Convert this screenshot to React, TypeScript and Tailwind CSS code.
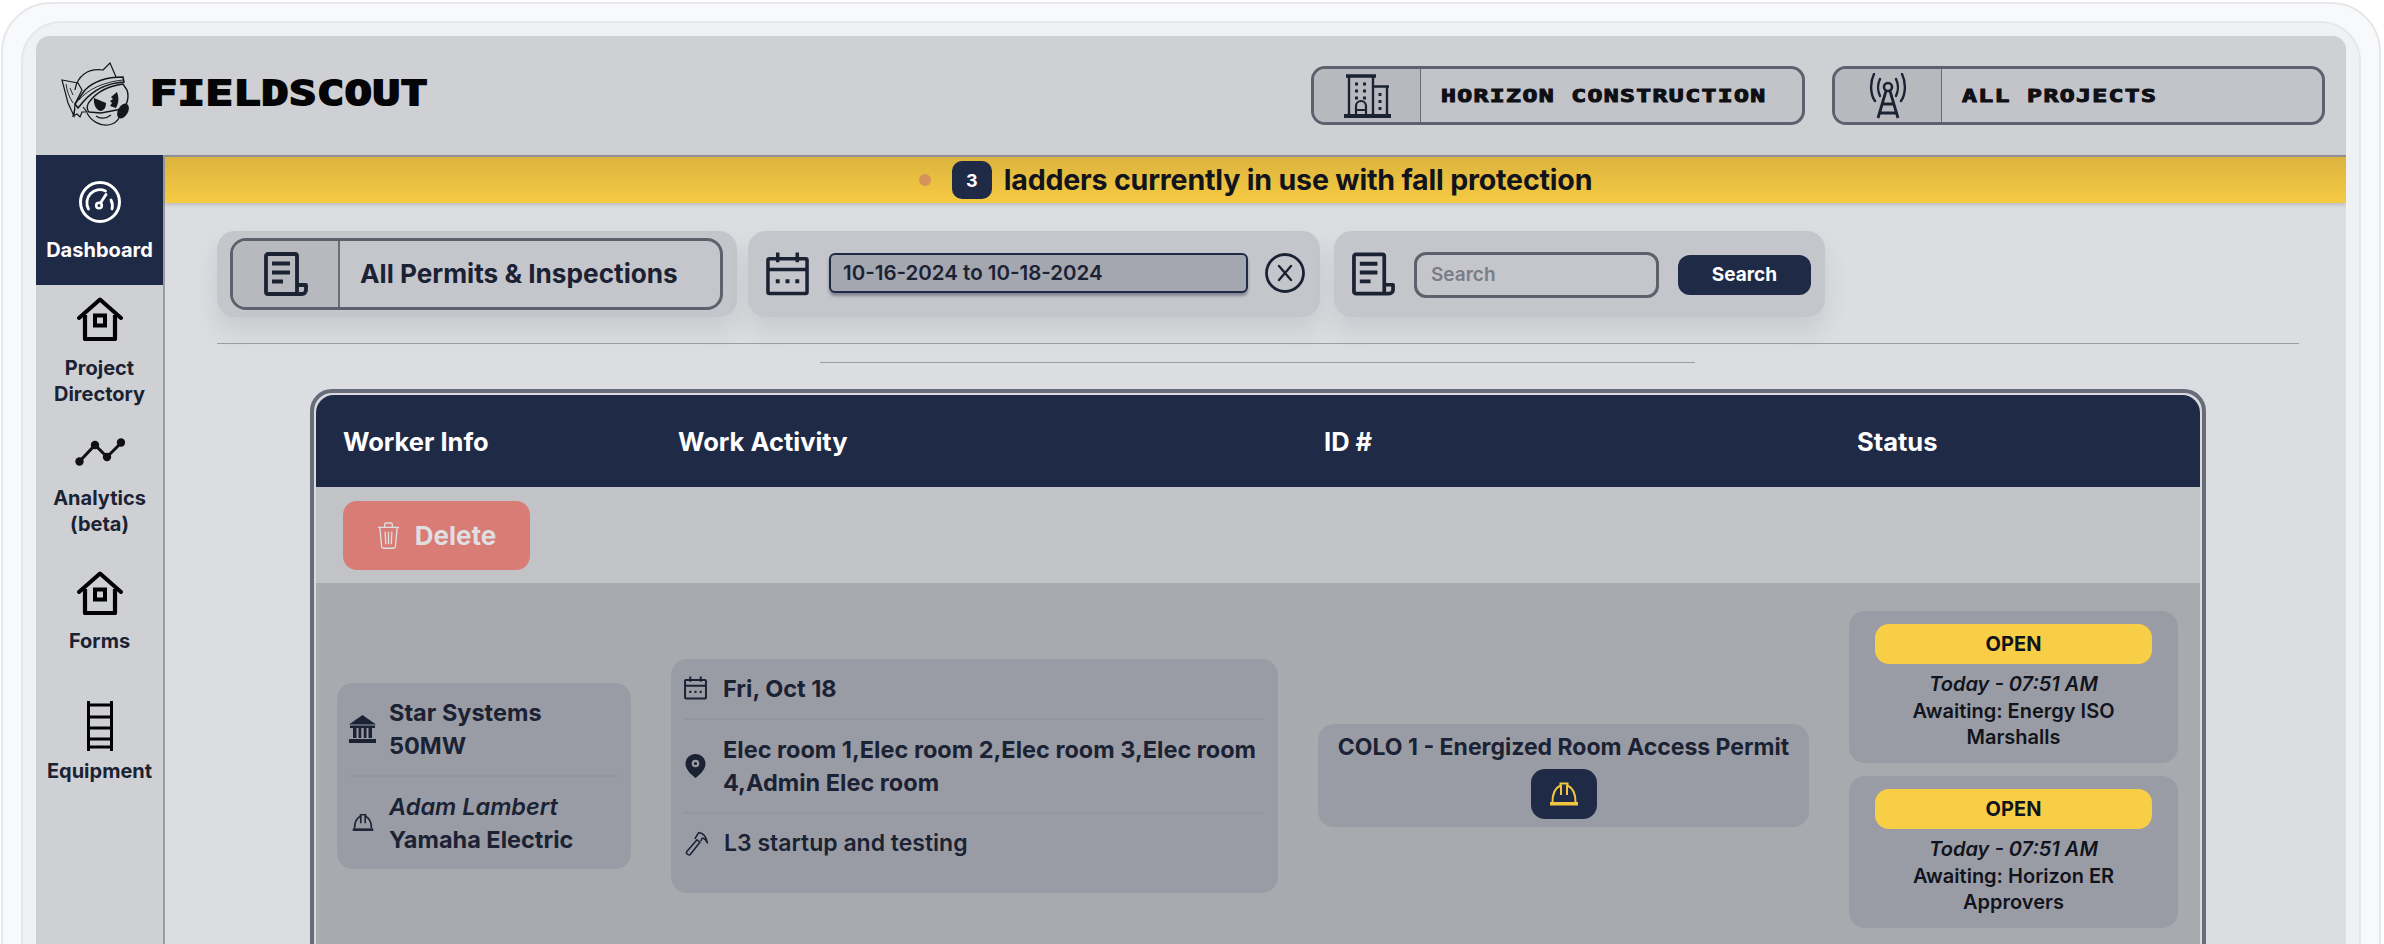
import { ReactNode } from 'react'

const navy = '#1f2a47'

function Gauge({ className }: { className?: string }) {
  return (
    <svg viewBox="0 0 42 42" fill="none" stroke="currentColor" className={className}>
      <circle cx="21" cy="21" r="19.5" strokeWidth="3" />
      <path d="M9.500 28a13 13 0 0 1 17-18" strokeWidth="2.800" strokeLinecap="round" />
      <path d="M33 28a13 13 0 0 0-1-9" strokeWidth="2.800" strokeLinecap="round" />
      <circle cx="20" cy="24.500" r="2.800" strokeWidth="2.600" />
      <path d="M21.500 22 27 13.500" strokeWidth="2.800" strokeLinecap="round" />
    </svg>
  )
}

function HomeIcon({ className }: { className?: string }) {
  return (
    <svg viewBox="0 0 46 44" fill="none" stroke="currentColor" className={className}>
      <path d="M2 21 23 2.500 44 21" strokeWidth="4" strokeLinecap="round" strokeLinejoin="round" />
      <path d="M8 18v24h30V18" strokeWidth="4.200" strokeLinejoin="round" />
      <rect x="18" y="18.500" width="10" height="10" strokeWidth="4" />
    </svg>
  )
}

function ChartIcon({ className }: { className?: string }) {
  return (
    <svg viewBox="0 0 50 28" fill="none" stroke="currentColor" className={className}>
      <path d="M4 24 20 7l12 12L46 5" strokeWidth="3" />
      <g fill="currentColor" stroke="none">
        <circle cx="4.500" cy="23.500" r="4.200" />
        <circle cx="20" cy="7" r="4.200" />
        <circle cx="32" cy="19" r="4.200" />
        <circle cx="46" cy="4.500" r="4.200" />
      </g>
    </svg>
  )
}

function LadderIcon({ className }: { className?: string }) {
  return (
    <svg viewBox="0 0 26 50" fill="none" stroke="currentColor" strokeWidth="3" className={className}>
      <path d="M1.500 0v50M24.500 0v50M1.500 4h23M1.500 16h23M1.500 27h23M1.500 38h23M1.500 46h23" />
    </svg>
  )
}

function ScrollDoc({ className }: { className?: string }) {
  return (
    <svg viewBox="0 0 44 44" fill="none" stroke="currentColor" className={className}>
      <path d="M33 41V4a2 2 0 0 0-2-2H4a2 2 0 0 0-2 2v36a2 2 0 0 0 2 2h34a4 4 0 0 0 4-4v-5h-9" strokeWidth="3.800" strokeLinejoin="round" />
      <path d="M8 11.500h18M8 20.500h18M8 29.500h11" strokeWidth="4" />
    </svg>
  )
}

function CalendarIcon({ className, sw = 3.600 }: { className?: string; sw?: number }) {
  return (
    <svg viewBox="0 0 44 44" fill="none" stroke="currentColor" className={className}>
      <rect x="2" y="6.500" width="40" height="35.500" rx="1.500" strokeWidth={sw} />
      <path d="M2 17.500h40M12 0v10M32 0v10" strokeWidth={sw} />
      <path d="M10 29.500h4M20 29.500h4M30 29.500h4" strokeWidth={sw + 0.5} />
    </svg>
  )
}

function XCircle({ className }: { className?: string }) {
  return (
    <svg viewBox="0 0 40 40" fill="none" stroke="currentColor" className={className}>
      <circle cx="20" cy="20" r="18.500" strokeWidth="2.800" />
      <path d="m14 13 12 14m0-14L14 27" strokeWidth="2.400" strokeLinecap="round" />
    </svg>
  )
}

function BuildingIcon({ className }: { className?: string }) {
  return (
    <svg viewBox="0 0 47 44" fill="none" stroke="#1b2233" className={className}>
      <path d="M2 2h30" strokeWidth="3.500" />
      <path d="M5 2v39M29 2v39M29 12.500h16M43 12.500V41" strokeWidth="2.400" />
      <path d="M0 42h47" strokeWidth="4" />
      <path d="M12 41V32a5 5 0 0 1 10 0v9M12 36h10" strokeWidth="2.200" />
      <path d="M11 10h3M19 10h3M11 17h3M19 17h3M11 24h3M19 24h3M36 19v3M36 26v3M36 33v3" strokeWidth="3" />
    </svg>
  )
}

function TowerIcon({ className }: { className?: string }) {
  return (
    <svg viewBox="0 0 46 46" fill="none" stroke="#1b2233" className={className}>
      <circle cx="23" cy="14" r="4" strokeWidth="2.600" />
      <path d="M21 18 13 45M25 18l8 27M17 31h12M15 40h16" strokeWidth="2.800" />
      <path d="M15 6c-2.500 5-2.500 12 0 17M31 6c2.500 5 2.500 12 0 17M9 1C5 9 5 21 10 28M37 1c4 8 4 20-1 27" strokeWidth="2.400" strokeLinecap="round" />
    </svg>
  )
}

function HardHat({ className, sw = 2 }: { className?: string; sw?: number }) {
  return (
    <svg viewBox="0 0 30 24" fill="none" stroke="currentColor" className={className}>
      <path d="M3.500 20C3.500 12 6 6 11.500 3.500V1.500h7v2C24 6 26.500 12 26.500 20" strokeWidth={sw} />
      <path d="M12 3v10M18 3v10" strokeWidth={sw} />
      <path d="M1 20h28v3.500H1z" fill="currentColor" stroke="none" />
    </svg>
  )
}

function BankIcon({ className }: { className?: string }) {
  return (
    <svg viewBox="0 0 27 28" fill="currentColor" className={className}>
      <path d="M13.500 0 27 9.500H0z" />
      <rect x="1" y="10.500" width="25" height="2.500" />
      <rect x="4" y="13" width="3.500" height="10" />
      <rect x="9.500" y="13" width="2.800" height="10" />
      <rect x="14.700" y="13" width="2.800" height="10" />
      <rect x="19.500" y="13" width="3.500" height="10" />
      <rect x="0" y="24" width="27" height="4" />
    </svg>
  )
}

function PinIcon({ className }: { className?: string }) {
  return (
    <svg viewBox="0 0 20 24" className={className}>
      <path d="M10 0C4.500 0 0 4.300 0 9.700 0 15.500 6 21 10 24c4-3 10-8.500 10-14.300C20 4.300 15.500 0 10 0z" fill="currentColor" />
      <circle cx="10" cy="9.500" r="3.800" fill="#9a9ca5" />
      <circle cx="10" cy="9.500" r="1.600" fill="currentColor" />
    </svg>
  )
}

function HammerIcon({ className }: { className?: string }) {
  return (
    <svg viewBox="0 0 24 24" fill="none" stroke="currentColor" strokeWidth="1.500" strokeLinejoin="round" className={className}>
      <path d="M2.500 20 12.500 8.500l2.800 2.300L5.800 22.800c-1.200 1-4.200-1.400-3.300-2.800z" />
      <path d="M10.500 7.500 14 1.500c4.500.5 7.500 4.500 8.500 10-1.500-3-3-4.500-5-4.800l-1.500 3" />
    </svg>
  )
}

function TrashIcon({ className }: { className?: string }) {
  return (
    <svg viewBox="0 0 24 28" fill="none" stroke="currentColor" strokeWidth="1.400" className={className}>
      <path d="M1 5.500h22M3 6l1.800 19.500a2 2 0 0 0 2 1.800h10.400a2 2 0 0 0 2-1.800L21 6M8 5V2.500a1.500 1.500 0 0 1 1.500-1.500h5A1.500 1.500 0 0 1 16 2.500V5" />
      <path d="M8.500 10l.6 13M12 10v13M15.500 10l-.6 13" />
    </svg>
  )
}

// mascot head with helmet and goggles, drawn by hand
function Logo() {
  return (
    <svg viewBox="0 0 68 64" fill="none" stroke="#15171c" strokeWidth="1.200" className="w-[68px] h-[64px]">
      <path d="M14 28C16 14 27 6 42 8L49 1l6 14" />
      <path d="M1 18l16 3 4 7-7 14-1 12-6-13z" />
      <path d="M5 22c1 7 3 13 7 19M9 26l3 7" strokeWidth="0.900" />
      <path d="M14 42 24 28c8-8 22-13 38-13l1 5c-15 1-30 7-41 20l-5 6z" fill="#cfd0d4" strokeWidth="1.500" />
      <path d="M18 38c9-11 25-18 44-20" strokeWidth="0.900" />
      <path d="M29 39c-3 3-4 8-1 11l12 1 21-4c6-4 7-13 5-19l-4-6C47 24 36 30 29 39z" fill="#cfd0d4" strokeWidth="1.400" />
      <path d="M33 36l12 5c0 5-2 7-5 8-4 0-8-6-7-13z" fill="#15171c" stroke="none" />
      <path d="M56 30l-6 5 2 2-3 2 2 2-2 3 6 2c3-5 3-11 1-16z" fill="#15171c" stroke="none" />
      <path d="M26 51c4 8 13 13 21 12 7-1 10-4 12-9" />
      <path d="M35 54c4 3 10 3 15-1" />
      <ellipse cx="62" cy="49" rx="5" ry="8" fill="#15171c" stroke="none" transform="rotate(30 62 49)" />
      <path d="M14 47l-2 7 4-2 3 3 2-5 5 0-4-5" />
    </svg>
  )
}

function SideItem({ icon, label, className }: { icon: ReactNode; label: ReactNode; className: string }) {
  return (
    <div className={`flex flex-col items-center ${className}`}>
      {icon}
      <span className="text-[20px] leading-[26px] font-bold text-center text-[#1b2233] mt-[var(--g)]">{label}</span>
    </div>
  )
}

function TopPill({ icon, label, className }: { icon: ReactNode; label: string; className: string }) {
  return (
    <div className={`flex h-[59px] rounded-[14px] border-[3px] border-[#5d616e] bg-[#c3c4c9] overflow-hidden ${className}`}>
      <div className="w-[107px] shrink-0 flex items-center justify-center bg-[#b8b9be] border-r border-[#6a6d78]">{icon}</div>
      <span className="ml-[20px] self-center font-['DejaVu_Sans_Mono'] font-bold text-[18px] leading-none text-[#0e1015] tracking-[1px] origin-left scale-x-[1.375] whitespace-nowrap [-webkit-text-stroke:1px_#0e1015]">{label}</span>
    </div>
  )
}

function FilterCard({ children, className }: { children: ReactNode; className: string }) {
  return (
    <div className={`h-[86px] rounded-[18px] bg-[#c5c6cb] shadow-[0_14px_22px_rgba(90,92,100,0.14)] flex items-center ${className}`}>{children}</div>
  )
}

function StatusCard({ who, group }: { who: string; group: string }) {
  return (
    <div className="h-[152px] rounded-[16px] bg-[#9a9ca5] pt-[13px] px-[26px] text-center text-[#11141c]">
      <div className="h-[40px] rounded-[14px] bg-[#f8ce46] flex items-center justify-center text-[20px] font-bold">OPEN</div>
      <div className="mt-[7px] text-[20px] leading-[26.500px] font-semibold">
        <div className="italic">Today - 07:51 AM</div>
        <div>Awaiting: {who}</div>
        <div>{group}</div>
      </div>
    </div>
  )
}

export default function App() {
  return (
    <div className="h-[944px] w-[2384px] overflow-hidden bg-white font-['Inter',sans-serif] text-[#1b2233]">
      <div className="h-[1100px] ml-px mr-[3px] mt-[2px] rounded-t-[50px] border-2 border-[#e6e7ea] bg-[#f8f9fb] pt-[17px] px-[18px]">
        <div className="h-[1100px] rounded-t-[40px] border-2 border-[#e6e7ea] bg-[#f0f1f3] pt-[13px] pl-[13px] pr-[13px]">
          <div className="h-[1000px] w-[2310px] rounded-t-[14px] overflow-hidden bg-[#dcdde1] flex flex-col">
            <header className="h-[119px] shrink-0 bg-[#cfd0d4] flex items-center">
              <div className="ml-[25px] mt-[-4px]"><Logo /></div>
              <span className="ml-[21px] mt-[-4px] font-['DejaVu_Sans_Mono'] font-bold text-[33px] leading-none text-[#050507] origin-left scale-x-[1.36] tracking-[0.6px] [-webkit-text-stroke:2px_#050507]">FIELDSCOUT</span>
              <div className="ml-auto flex gap-[27px] mr-[21px]">
                <TopPill className="w-[494px]" icon={<BuildingIcon className="w-[47px] h-[44px]" />} label="HORIZON CONSTRUCTION" />
                <TopPill className="w-[493px]" icon={<TowerIcon className="w-[46px] h-[46px]" />} label="ALL PROJECTS" />
              </div>
            </header>

            <div className="flex flex-1">
              <aside className="w-[129px] shrink-0 bg-[#cfd0d4] border-r-2 border-[#9a9ba3]">
                <div className="h-[130px] bg-[#1f2a47] text-white flex flex-col items-center pt-[26px]">
                  <Gauge className="w-[42px] h-[42px]" />
                  <span className="mt-[14px] text-[20px] leading-[26px] font-bold">Dashboard</span>
                </div>
                <SideItem className="pt-[12px] [--g:14px]" icon={<HomeIcon className="w-[46px] h-[44px] text-black" />} label={<>Project<br />Directory</>} />
                <SideItem className="pt-[31px] [--g:19px]" icon={<ChartIcon className="w-[50px] h-[28px] text-[#111]" />} label={<>Analytics<br />(beta)</>} />
                <SideItem className="pt-[34px] [--g:13px]" icon={<HomeIcon className="w-[46px] h-[44px] text-black" />} label="Forms" />
                <SideItem className="pt-[47px] [--g:7px]" icon={<LadderIcon className="w-[26px] h-[50px] text-black" />} label="Equipment" />
              </aside>

              <main className="flex-1 min-w-0">
                <div className="h-[48px] border-t-2 border-[#8e8f95] bg-gradient-to-b from-[#dcb33e] to-[#f5cb43] shadow-[0_2px_4px_rgba(0,0,0,0.15)] flex items-center justify-center">
                  <span className="w-[12px] h-[12px] rounded-full bg-[#d6925a]" />
                  <span className="ml-[21px] w-[40px] h-[38px] rounded-[10px] bg-[#1f2a47] text-white text-[18px] font-bold flex items-center justify-center">3</span>
                  <span className="ml-[12px] text-[28.600px] font-bold text-[#11141c] tracking-[-0.2px]">ladders currently in use with fall protection</span>
                </div>

                <div className="flex gap-[11px] mt-[28px] ml-[52px]">
                  <FilterCard className="w-[520px] pl-[13px]">
                    <div className="w-[493px] h-[72px] rounded-[16px] border-[3px] border-[#5d616e] flex overflow-hidden">
                      <div className="w-[107px] shrink-0 bg-[#b8b9be] border-r-2 border-[#6a6d78] flex items-center justify-center">
                        <ScrollDoc className="w-[44px] h-[44px] text-[#1b2233]" />
                      </div>
                      <span className="ml-[20px] self-center text-[26.200px] font-bold whitespace-nowrap">All Permits &amp; Inspections</span>
                    </div>
                  </FilterCard>
                  <FilterCard className="w-[572px] pl-[18px]">
                    <CalendarIcon className="w-[43px] h-[44px] text-[#1b2233]" />
                    <div className="ml-[20px] -mt-[2px] w-[419px] h-[40px] rounded-[6px] border-2 border-[#1f2a47] bg-[#a4a6b0] shadow-[0_3px_3px_rgba(50,55,80,0.45)] flex items-center pl-[12px] text-[20.500px] font-semibold text-[#1b2233] whitespace-nowrap">10-16-2024 to 10-18-2024</div>
                    <XCircle className="ml-[17px] -mt-[2px] w-[40px] h-[40px] text-[#1b2233]" />
                  </FilterCard>
                  <FilterCard className="w-[491px] ml-[3px] pl-[18px]">
                    <ScrollDoc className="w-[43px] h-[46px] text-[#1b2233]" />
                    <div className="ml-[19px] mt-[2px] w-[245px] h-[46px] rounded-[12px] border-[3px] border-[#5d616e] flex items-center pl-[14px] text-[19px] font-semibold text-[#7a7c86]">Search</div>
                    <button className="ml-[19px] mt-[2px] w-[133px] h-[40px] rounded-[12px] bg-[#1f2a47] text-white text-[19px] font-bold">Search</button>
                  </FilterCard>
                </div>

                <div className="mt-[26px] ml-[52px] w-[2082px] h-px bg-[#9c9da3]" />
                <div className="mt-[18px] ml-[655px] w-[875px] h-px bg-[#9c9da3]" />

                <div className="mt-[26px] ml-[145px] w-[1896px] h-[700px] rounded-t-[22px] border-4 border-[#676b7a] p-[2px] bg-[#d8dade]">
                  <div className="rounded-t-[18px] overflow-hidden h-full bg-[#a9aab0]">
                    <div className="h-[92px] pt-[3px] flex items-center text-white text-[25.500px] font-bold" style={{ backgroundColor: navy }}>
                      <div className="w-[362px] pl-[27px]">Worker Info</div>
                      <div className="w-[646px]">Work Activity</div>
                      <div className="w-[533px]">ID #</div>
                      <div>Status</div>
                    </div>
                    <div className="h-[96px] bg-[#c2c3c7] pt-[14px] pl-[27px]">
                      <button className="w-[187px] h-[69px] rounded-[14px] bg-[#d87c75] text-[#dfdfe2] text-[26px] font-bold flex items-center justify-center gap-[15px]">
                        <TrashIcon className="w-[23px] h-[27px]" />
                        Delete
                      </button>
                    </div>
                    <div className="pt-[28px] pl-[21px] flex items-center gap-[40px] w-[1884px]">
                      <div className="mt-[12px] w-[294px] h-[186px] rounded-[16px] bg-[#9a9ca5] px-[12px] text-[23.500px] leading-[33px] font-bold">
                        <div className="h-[94px] flex items-center gap-[13px] border-b-2 border-[#94969d]">
                          <BankIcon className="w-[27px] h-[28px]" />
                          <div>Star Systems<br />50MW</div>
                        </div>
                        <div className="h-[92px] flex items-center">
                          <div className="w-[27px] flex justify-center">
                            <HardHat className="w-[22px] h-[19px]" sw={2.200} />
                          </div>
                          <div className="ml-[13px]"><span className="italic font-semibold">Adam Lambert</span><br />Yamaha Electric</div>
                        </div>
                      </div>

                      <div className="mt-[12px] w-[607px] h-[234px] rounded-[16px] bg-[#9a9ca5] px-[13px] text-[23.500px] leading-[33px] font-bold">
                        <div className="h-[61px] flex items-center gap-[16px] border-b-2 border-[#94969d]">
                          <CalendarIcon className="w-[23px] h-[24px]" sw={3.800} />
                          Fri, Oct 18
                        </div>
                        <div className="h-[94px] flex items-center gap-[16px] border-b-2 border-[#94969d]">
                          <div className="w-[23px] shrink-0 flex justify-center"><PinIcon className="w-[21px] h-[24px]" /></div>
                          <div>Elec room 1,Elec room 2,Elec room 3,Elec room 4,Admin Elec room</div>
                        </div>
                        <div className="h-[60px] flex items-center gap-[15px] text-[23px] font-semibold">
                          <HammerIcon className="w-[25px] h-[25px]" />
                          L3 startup and testing
                        </div>
                      </div>

                      <div className="mt-[12px] w-[491px] h-[103px] rounded-[16px] bg-[#9a9ca5] pt-[8px] text-center">
                        <div className="text-[23px] leading-[30px] font-bold whitespace-nowrap">COLO 1 - Energized Room Access Permit</div>
                        <div className="mx-auto mt-[7px] w-[66px] h-[50px] rounded-[14px] bg-[#1f2a47] flex items-center justify-center">
                          <HardHat className="w-[30px] h-[24px] text-[#f0c53f]" />
                        </div>
                      </div>

                      <div className="w-[329px] flex flex-col gap-[13px]">
                        <StatusCard who="Energy ISO" group="Marshalls" />
                        <StatusCard who="Horizon ER" group="Approvers" />
                      </div>
                    </div>
                  </div>
                </div>
              </main>
            </div>
          </div>
        </div>
      </div>
    </div>
  )
}
